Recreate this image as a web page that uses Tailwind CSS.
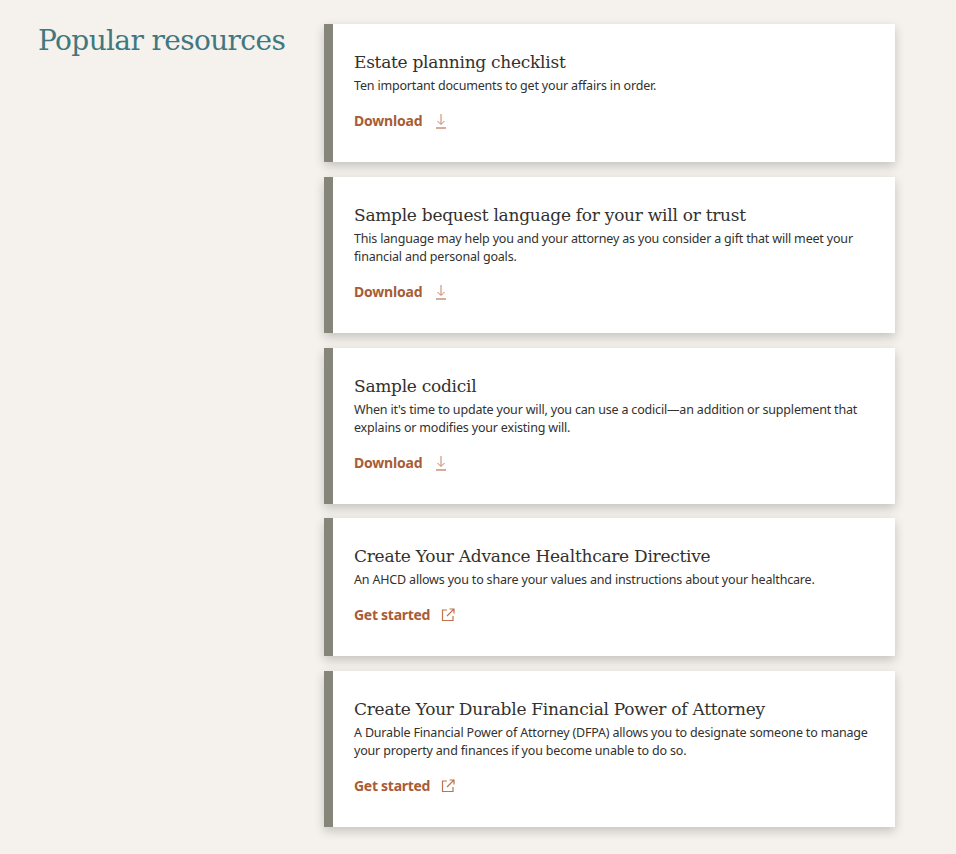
<!doctype html>
<html><head><meta charset="utf-8">
<script src="https://cdn.jsdelivr.net/npm/@tailwindcss/browser@4"></script>
</head>
<body class="bg-[#f5f2ed] m-0">
<main class="w-[956px] h-[854px] overflow-hidden flex items-start pt-6 font-['Noto_Sans',sans-serif]">
<h2 class="w-[324px] shrink-0 pl-[38px] -mt-[5px] font-['DejaVu_Serif',serif] text-[28px] leading-[44px] tracking-[-0.62px] whitespace-nowrap text-[#40787f]">Popular resources</h2>
<div class="w-[571px] flex flex-col">
<article class="h-[138px] mb-[15px] bg-white border-l-[9px] border-[#86857a] shadow-[0_4px_10px_rgba(0,0,0,0.2)] pl-[21px] pr-5 pt-[26px]">
<h3 class="font-['DejaVu_Serif',serif] text-[17px] leading-6 tracking-[-0.27px] text-[#33312e]">Estate planning checklist</h3>
<p class="mt-[3px] text-[12.5px] leading-[18px] tracking-[-0.18px] text-[#33312e]">Ten important documents to get your affairs in order.</p>
<a class="mt-4 flex items-center gap-[13px] text-[14px] leading-5 tracking-[-0.2px] font-bold text-[#a85c36]">Download
<svg class="w-3 h-4" viewBox="0 0 12 16" fill="none" stroke="#c9805e" stroke-width="1"><path d="M6 1v10M2.500 8L6 11.500 9.500 8"/><path d="M1 15h10" stroke="#a85c36"/></svg></a>
</article>
<article class="h-[156px] mb-[15px] bg-white border-l-[9px] border-[#86857a] shadow-[0_4px_10px_rgba(0,0,0,0.2)] pl-[21px] pr-5 pt-[26px]">
<h3 class="font-['DejaVu_Serif',serif] text-[17px] leading-6 tracking-[-0.27px] text-[#33312e]">Sample bequest language for your will or trust</h3>
<p class="mt-[3px] text-[12.5px] leading-[18px] tracking-[-0.18px] text-[#33312e]">This language may help you and your attorney as you consider a gift that will meet your financial and personal goals.</p>
<a class="mt-4 flex items-center gap-[13px] text-[14px] leading-5 tracking-[-0.2px] font-bold text-[#a85c36]">Download
<svg class="w-3 h-4" viewBox="0 0 12 16" fill="none" stroke="#c9805e" stroke-width="1"><path d="M6 1v10M2.500 8L6 11.500 9.500 8"/><path d="M1 15h10" stroke="#a85c36"/></svg></a>
</article>
<article class="h-[156px] mb-[14px] bg-white border-l-[9px] border-[#86857a] shadow-[0_4px_10px_rgba(0,0,0,0.2)] pl-[21px] pr-5 pt-[26px]">
<h3 class="font-['DejaVu_Serif',serif] text-[17px] leading-6 tracking-[-0.27px] text-[#33312e]">Sample codicil</h3>
<p class="mt-[3px] text-[12.5px] leading-[18px] tracking-[-0.18px] text-[#33312e]">When it's time to update your will, you can use a codicil—an addition or supplement that explains or modifies your existing will.</p>
<a class="mt-4 flex items-center gap-[13px] text-[14px] leading-5 tracking-[-0.2px] font-bold text-[#a85c36]">Download
<svg class="w-3 h-4" viewBox="0 0 12 16" fill="none" stroke="#c9805e" stroke-width="1"><path d="M6 1v10M2.500 8L6 11.500 9.500 8"/><path d="M1 15h10" stroke="#a85c36"/></svg></a>
</article>
<article class="h-[138px] mb-[15px] bg-white border-l-[9px] border-[#86857a] shadow-[0_4px_10px_rgba(0,0,0,0.2)] pl-[21px] pr-5 pt-[26px]">
<h3 class="font-['DejaVu_Serif',serif] text-[17px] leading-6 tracking-[-0.27px] text-[#33312e]">Create Your Advance Healthcare Directive</h3>
<p class="mt-[3px] text-[12.5px] leading-[18px] tracking-[-0.18px] text-[#33312e]">An AHCD allows you to share your values and instructions about your healthcare.</p>
<a class="mt-4 flex items-center gap-[11px] text-[14px] leading-5 tracking-[-0.28px] font-bold text-[#a85c36]">Get started
<svg class="w-[14px] h-[14px]" viewBox="0 0 14 14" fill="none" stroke="#c0714d" stroke-width="1.2"><path d="M6 2H1.500v10.500H12V8"/><path d="M6 8l7-7M8.500 1H13v4.500"/></svg></a>
</article>
<article class="h-[156px] bg-white border-l-[9px] border-[#86857a] shadow-[0_4px_10px_rgba(0,0,0,0.2)] pl-[21px] pr-5 pt-[26px]">
<h3 class="font-['DejaVu_Serif',serif] text-[17px] leading-6 tracking-[-0.27px] text-[#33312e]">Create Your Durable Financial Power of Attorney</h3>
<p class="mt-[3px] text-[12.5px] leading-[18px] tracking-[-0.18px] text-[#33312e]">A Durable Financial Power of Attorney (DFPA) allows you to designate someone to manage your property and finances if you become unable to do so.</p>
<a class="mt-4 flex items-center gap-[11px] text-[14px] leading-5 tracking-[-0.28px] font-bold text-[#a85c36]">Get started
<svg class="w-[14px] h-[14px]" viewBox="0 0 14 14" fill="none" stroke="#c0714d" stroke-width="1.2"><path d="M6 2H1.500v10.500H12V8"/><path d="M6 8l7-7M8.500 1H13v4.500"/></svg></a>
</article>
</div>
</main>
</body></html>
